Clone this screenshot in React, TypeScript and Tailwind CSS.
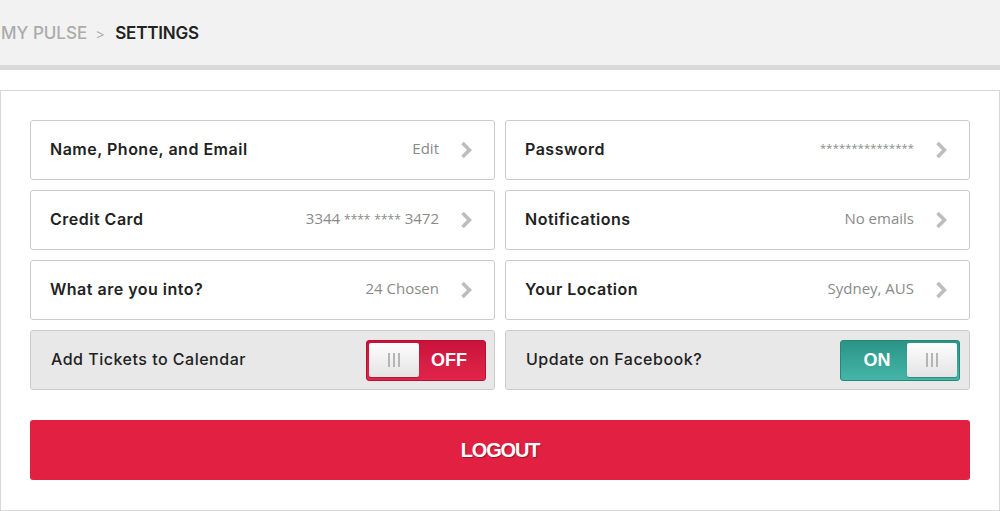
import { useState } from 'react';

const rows = [
  [
    { label: 'Name, Phone, and Email', value: 'Edit' },
    { label: 'Password', value: '***************', secret: true },
  ],
  [
    { label: 'Credit Card', value: '3344 **** **** 3472' },
    { label: 'Notifications', value: 'No emails' },
  ],
  [
    { label: 'What are you into?', value: '24 Chosen' },
    { label: 'Your Location', value: 'Sydney, AUS' },
  ],
];

function Chevron() {
  return (
    <svg width="12" height="18" viewBox="0 0 12 18" className="shrink-0">
      <polyline points="2.5,2 9.5,9 2.5,16" fill="none" stroke="#bdbdbd" strokeWidth="3.6" strokeLinejoin="miter" />
    </svg>
  );
}

// masked digits are drawn smaller than the numbers around them
function Value({ text }: { text: string }) {
  const parts = text.split(/(\*+)/).filter(Boolean);
  return (
    <>
      {parts.map((p, i) =>
        p.startsWith('*') ? (
          <span key={i} className="text-[12px]">{p}</span>
        ) : (
          <span key={i}>{p}</span>
        )
      )}
    </>
  );
}

function Knob() {
  return (
    <div className="flex h-[34px] w-[50px] items-center justify-center gap-[3px] rounded-[2px] bg-gradient-to-b from-[#fdfdfd] to-[#e4e4e4] shadow-[0_1px_1px_rgba(0,0,0,0.25)]">
      <span className="h-[14px] w-[2px] bg-[#b5b5b5]" />
      <span className="h-[14px] w-[2px] bg-[#b5b5b5]" />
      <span className="h-[14px] w-[2px] bg-[#b5b5b5]" />
    </div>
  );
}

function Toggle({ on, onClick }: { on: boolean; onClick: () => void }) {
  return (
    <button
      onClick={onClick}
      className={`flex h-[41px] w-[120px] cursor-pointer items-center rounded-[3px] border px-[2px] ${
        on
          ? 'border-[#23877a] bg-gradient-to-b from-[#2a9487] to-[#44b6a8]'
          : 'border-[#b8102f] bg-gradient-to-b from-[#c9123a] to-[#e2254a]'
      }`}
    >
      {on ? (
        <>
          <span className="flex-1 pl-1 text-center text-[18px] font-bold text-white [font-family:'Liberation_Sans',Arial,sans-serif]">ON</span>
          <Knob />
        </>
      ) : (
        <>
          <Knob />
          <span className="flex-1 pr-1 text-center text-[18px] font-bold text-white [font-family:'Liberation_Sans',Arial,sans-serif]">OFF</span>
        </>
      )}
    </button>
  );
}

export default function App() {
  const [calendar, setCalendar] = useState(false);
  const [facebook, setFacebook] = useState(true);

  return (
    <div className="min-h-screen bg-white [font-family:Inter,'Noto_Sans',sans-serif]">
      {/* Breadcrumb bar */}
      <header className="flex h-[70px] items-center border-b-[5px] border-[#dadada] bg-[#f2f2f2] pl-[1px] pt-[3px]">
        <span className="text-[17px] font-medium tracking-[0px] text-[#ababab]">MY PULSE</span>
        <span className="ml-[9px] mr-[11px] text-[14px] text-[#a8a8a8] [font-family:'Open_Sans',sans-serif]">&gt;</span>
        <span className="text-[17px] font-semibold tracking-[-0.2px] text-[#222]">SETTINGS</span>
      </header>

      <main className="pt-[20px]">
        <div className="border border-[#d8d8d8] px-[29px] pb-[30px] pt-[29px]">
          <div className="grid grid-cols-2 gap-[10px]">
            {rows.flat().map((item) => (
              <div
                key={item.label}
                className="flex h-[60px] cursor-pointer items-center rounded-[3px] border border-[#cccccc] bg-white pl-[19px] pr-[22px]"
              >
                <span className="flex-1 pb-[2px] text-[16px] font-semibold tracking-[0.5px] text-[#222]">{item.label}</span>
                <span
                  className={`mr-[21px] text-[#8a8a8a] [font-family:'Open_Sans',sans-serif] ${
                    item.secret ? 'pb-[3px] text-[11px] tracking-[0.2px]' : 'pb-[3px] text-[15px]'
                  }`}
                >
                  {item.secret ? item.value : <Value text={item.value} />}
                </span>
                <Chevron />
              </div>
            ))}

            <div className="flex h-[60px] items-center rounded-[3px] border border-[#cccccc] bg-[#e8e8e8] pl-[20px] pr-[8px]">
              <span className="flex-1 pb-[2px] text-[16px] font-medium tracking-[0.5px] text-[#222]">Add Tickets to Calendar</span>
              <Toggle on={calendar} onClick={() => setCalendar(!calendar)} />
            </div>
            <div className="flex h-[60px] items-center rounded-[3px] border border-[#cccccc] bg-[#e8e8e8] pl-[20px] pr-[9px]">
              <span className="flex-1 pb-[2px] text-[16px] font-medium tracking-[0.5px] text-[#222]">Update on Facebook?</span>
              <Toggle on={facebook} onClick={() => setFacebook(!facebook)} />
            </div>
          </div>

          <button className="mt-[30px] flex h-[60px] w-full cursor-pointer items-center justify-center rounded-[3px] bg-[#e22142] text-[20px] font-bold tracking-[-1.2px] text-white [font-family:'Liberation_Sans',Arial,sans-serif] [text-shadow:1px_1px_1px_rgba(0,0,0,0.35)]">
            LOGOUT
          </button>
        </div>
      </main>
    </div>
  );
}
